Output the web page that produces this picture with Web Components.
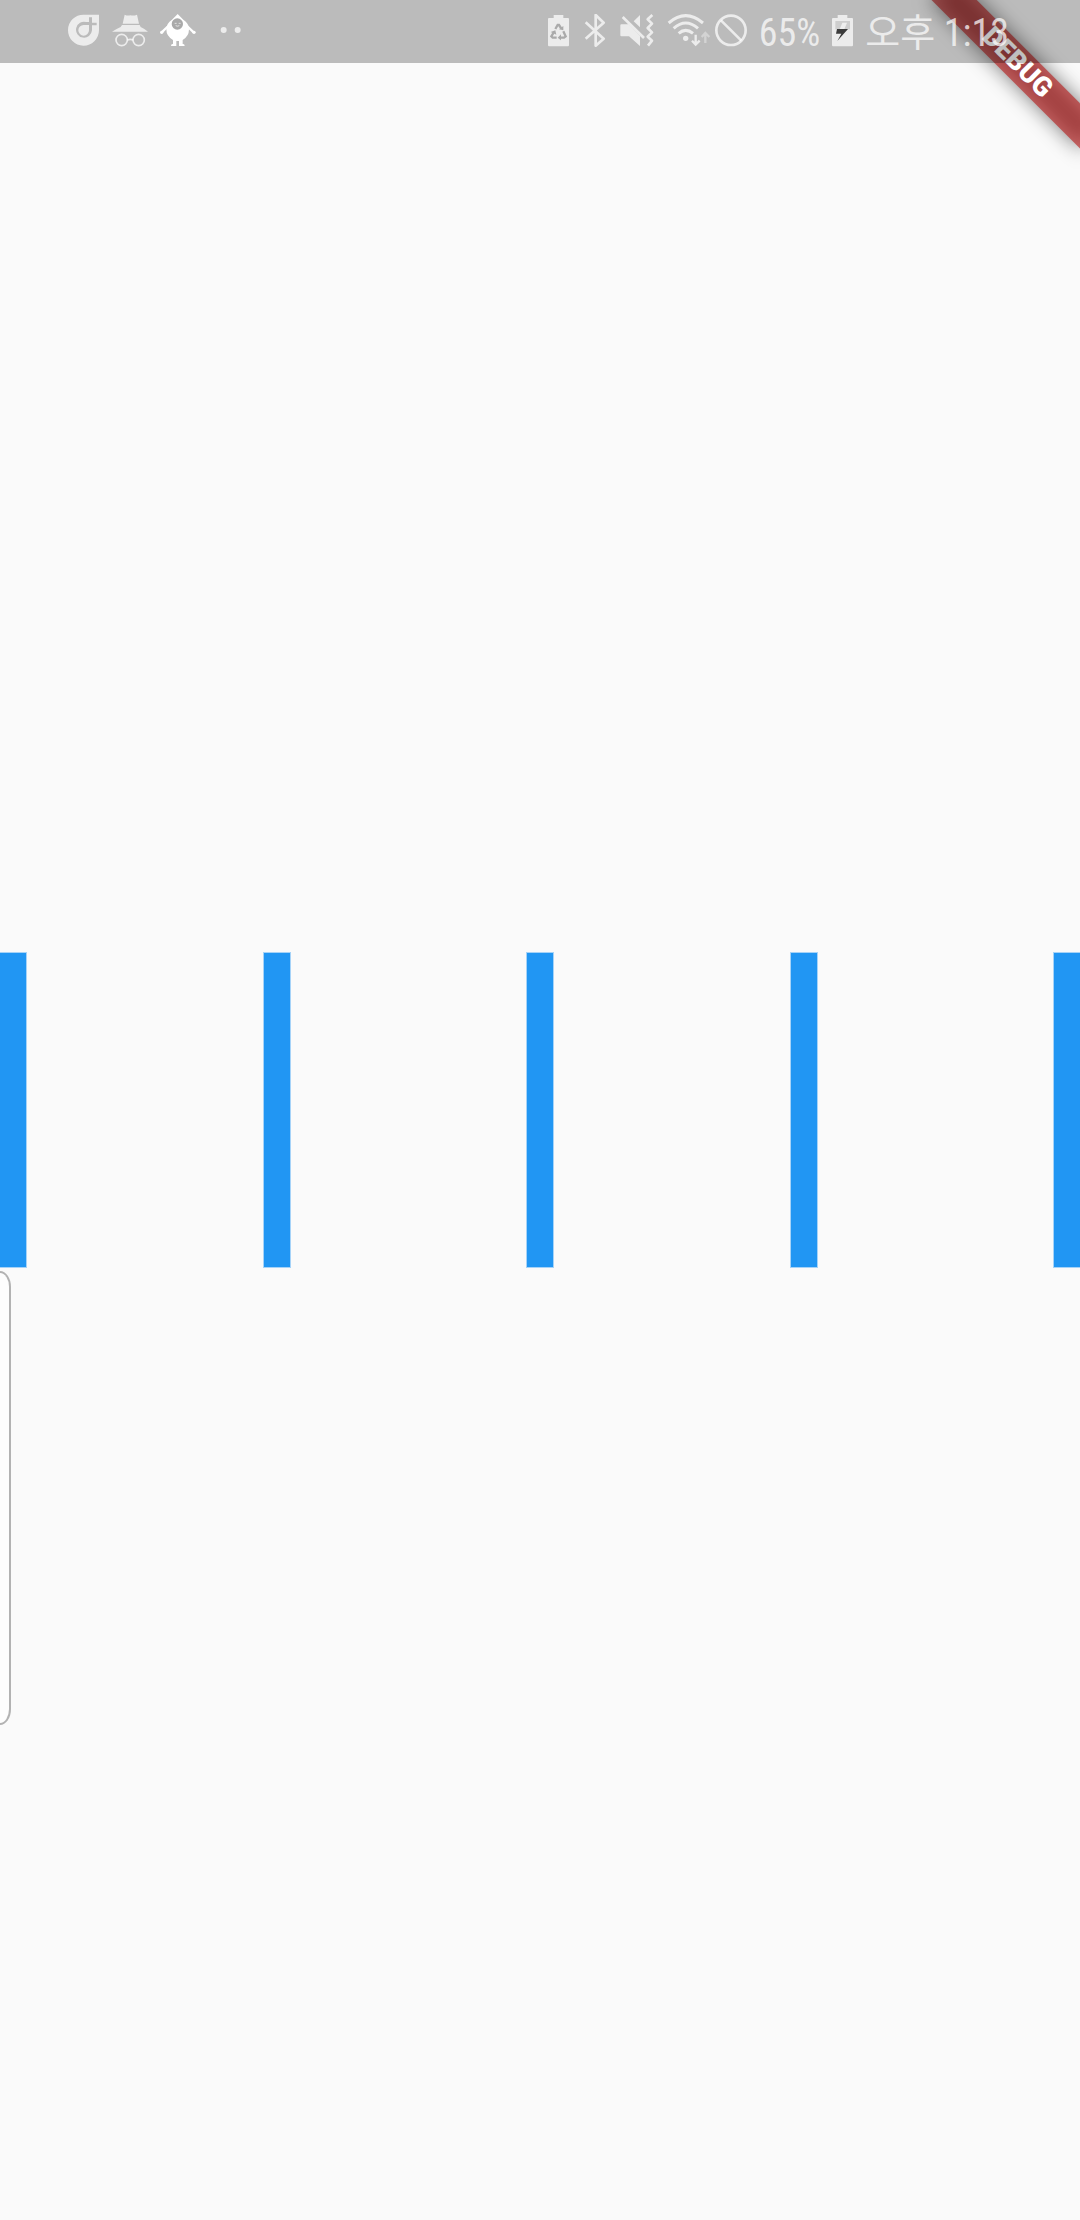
<!DOCTYPE html>
<html lang="ko">
<head>
<meta charset="utf-8">
<meta name="viewport" content="width=device-width, initial-scale=1">
<title>Bars</title>
<style>
  html, body { margin: 0; background: #fafafa; }
</style>
</head>
<body>
<demo-app></demo-app>

<template id="app-template">
  <style>
    :host { display: flex; flex-direction: column; justify-content: center; position: relative; min-height: 100vh; overflow: hidden; background: #fafafa; font-family: Roboto, sans-serif; }
    debug-banner { position: absolute; top: 0; right: 0; }
    status-bar { position: absolute; top: 0; left: 0; right: 0; }
    edge-handle { position: absolute; left: 0; top: 1271px; }
  </style>
  <bar-row></bar-row>
  <edge-handle></edge-handle>
  <debug-banner>DEBUG</debug-banner>
  <status-bar>
    <status-icon slot="left" name="drop"></status-icon>
    <status-icon slot="left" name="incognito"></status-icon>
    <status-icon slot="left" name="chick"></status-icon>
    <status-icon slot="left" name="dots"></status-icon>
    <status-icon slot="right" name="recycle"></status-icon>
    <status-icon slot="right" name="bluetooth"></status-icon>
    <status-icon slot="right" name="mute"></status-icon>
    <status-icon slot="right" name="wifi"></status-icon>
    <status-icon slot="right" name="block"></status-icon>
    <status-text slot="right">65%</status-text>
    <status-icon slot="right" name="charging"></status-icon>
    <status-text slot="right">오후 1:13</status-text>
  </status-bar>
</template>

<template id="bars-template">
  <style>
    :host { display: flex; justify-content: space-between; }
    i { width: 26px; height: 314px; background: #2196f3; box-shadow: 0 0 0 1px #a6d3f8; }
  </style>
  <i></i><i></i><i></i><i></i><i></i>
</template>

<template id="handle-template">
  <style>
    :host { display: block; box-sizing: border-box; width: 11px; height: 454px; background: #fdfdfd; border: 2px solid #b2b2b2; border-left: 0; border-radius: 0 11px 11px 0 / 0 16px 16px 0; }
  </style>
</template>

<template id="banner-template">
  <style>
    :host { display: block; width: 0; height: 0; }
    .ribbon { position: relative; width: 210px; height: 32px; transform-origin: 0 0; transform: rotate(45deg) translate(-105px, 73px); }
    .shadow, .label { position: absolute; inset: 0; }
    .shadow { background: rgba(0, 0, 0, .5); filter: blur(10px); }
    .label { background: rgba(183, 28, 28, .63); color: #fff; font-size: 27px; font-weight: 900; line-height: 30px; text-align: center; }
  </style>
  <div class="ribbon"><div class="shadow"></div><div class="label"><slot></slot></div></div>
</template>

<template id="status-template">
  <style>
    :host { display: flex; justify-content: space-between; box-sizing: border-box; height: 63px; padding: 14px 67px 0 68px; background: rgba(0, 0, 0, .25); color: rgba(255, 255, 255, .72); }
    .left, .right { display: flex; align-items: flex-start; }
    .left { gap: 12px; }
    .right { gap: 4px; }
  </style>
  <div class="left"><slot name="left"></slot></div>
  <div class="right"><slot name="right"></slot></div>
</template>

<template id="text-template">
  <style>
    :host { display: block; padding: 0 4px 0 8px; font: 38px/38px "Roboto Condensed", "Liberation Sans Narrow", Roboto, "Noto Sans CJK KR", sans-serif; white-space: nowrap; }
  </style>
  <slot></slot>
</template>

<script>
  // Each glyph: [width in px, left edge of the drawing, markup]; three drawing units per pixel.
  const ICONS = {
    drop: [32, 54, '<path fill="currentColor" fill-rule="evenodd" d="M101 44H147V91A46.500 46.500 0 1 1 101 44ZM117 52V66H109A24 24 0 1 0 126 91V76H140V68H126V52ZM117 75V91A16 16 0 1 1 101 75Z"/>'],
    incognito: [36, 187, '<path fill="currentColor" d="M219 71L225 44Q233 48 242 46Q253 48 262 44L268 71ZM217 75H270L273 81Q286 87 295 95H187Q200 87 213 81Z"/><g fill="none" stroke="currentColor" stroke-width="5"><circle cx="216" cy="120" r="17"/><circle cx="267" cy="120" r="17"/><path d="M233 120Q242 116 250 120"/></g>'],
    chick: [36, 330, '<g fill="#fff"><path d="M383 42L400 59Q417 70 417 88Q417 109 398 120V132Q404 131 404 138H387V123H379V138H363Q363 131 369 132V120Q349 109 349 88Q349 70 366 59Z"/><circle cx="335" cy="97" r="5"/><circle cx="432" cy="97" r="5"/><path fill="none" stroke="#fff" stroke-width="7" d="M335 97L355 78M431 97L411 78"/></g><circle cx="382" cy="72" r="17" fill="#aaa"/><path fill="none" stroke="#fff" stroke-width="2" d="M374 70H380M386 70H392M377 77Q382 80 388 77"/>'],
    dots: [40, 474, '<g fill="currentColor"><circle cx="521" cy="90" r="9"/><circle cx="563" cy="90" r="9"/></g>'],
    recycle: [28, 42, '<path fill="currentColor" d="M68 45H97V54H111Q114 54 114 57V135Q114 139 111 139H54Q51 139 51 135V57Q51 54 54 54H68Z"/><g fill="none" stroke="#aaa" stroke-width="7"><path d="M73 87L80 75H84L91 86M97 94L104 109L99 113H88M77 113H65L61 109L69 96"/></g><path fill="#aaa" d="M84 88L97 91L97 78ZM90 103V121L80 113ZM59 96L73 91L76 104Z"/>'],
    bluetooth: [34, 138, '<path fill="none" stroke="currentColor" stroke-width="8" stroke-linejoin="round" d="M164 67L218 116L194 137V45L218 68L164 116"/>'],
    mute: [44, 252, '<g fill="currentColor"><path d="M268 76Q268 73 271 73H292L327 108V138L294 109H271Q268 109 268 106Z"/><path d="M327 45V82L308 64Z"/></g><path fill="none" stroke="#bbb" stroke-width="5" d="M281 48L345 112"/><path fill="none" stroke="currentColor" stroke-width="8" d="M275 51L339 114"/><path fill="none" stroke="currentColor" stroke-width="8" stroke-linejoin="round" d="M364 45L350 58L363 71L350 84L363 97L350 110L363 122L351 137"/>'],
    wifi: [48, 396, '<g fill="none" stroke="currentColor" stroke-width="9"><path d="M413 69Q464 25 516 69"/><path d="M428 85Q464 53 501 85"/><path d="M443 100Q464 82 486 100"/></g><circle cx="464" cy="115" r="8" fill="currentColor"/><path fill="none" stroke="currentColor" stroke-width="7" d="M494 104V134M483 122L494 134L506 122"/><path fill="none" stroke="currentColor" stroke-opacity=".5" stroke-width="7" d="M523 129V99M512 111L523 99L535 111"/>'],
    block: [32, 552, '<g fill="none" stroke="currentColor" stroke-width="8"><circle cx="600" cy="91" r="44"/><path d="M570 61L631 122"/></g>'],
    charging: [25, 264, '<path fill="currentColor" d="M293 45H322V54H336Q339 54 339 57V135Q339 139 336 139H279Q276 139 276 135V57Q276 54 279 54H293Z"/><path fill="#cecece" d="M286 63H330V88H286Z"/><path fill="#eee" d="M307 68H321L313 88H299Z"/><path fill="#3c3c3c" d="M291 87H324L292 123L304 101H288Z"/>']
  };

  class TemplateElement extends HTMLElement {
    constructor() {
      super();
      const template = document.getElementById(this.constructor.template);
      this.attachShadow({ mode: 'open' }).append(template.content.cloneNode(true));
    }
  }
  const define = (tag, template) => customElements.define(tag, class extends TemplateElement {
    static template = template;
  });

  customElements.define('status-icon', class extends HTMLElement {
    connectedCallback() {
      if (this.shadowRoot) return;
      const [width, left, art] = ICONS[this.getAttribute('name')];
      this.attachShadow({ mode: 'open' }).innerHTML =
        `<style>:host { display: block; } svg { display: block; }</style>
         <svg aria-hidden="true" width="${width}" height="33" viewBox="${left} 42 ${width * 3} 99">${art}</svg>`;
    }
  });
  define('status-text', 'text-template');
  define('status-bar', 'status-template');
  define('debug-banner', 'banner-template');
  define('edge-handle', 'handle-template');
  define('bar-row', 'bars-template');
  define('demo-app', 'app-template');
</script>
</body>
</html>
